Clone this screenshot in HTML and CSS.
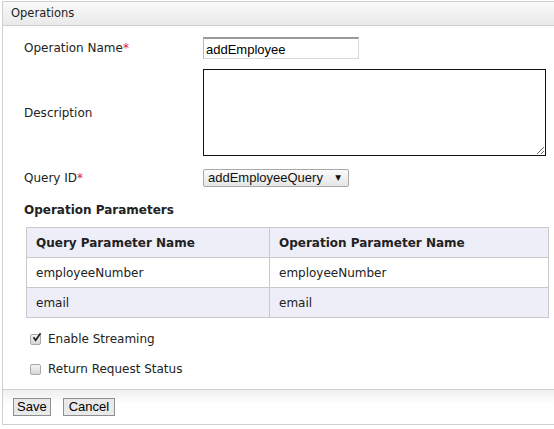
FILE: index.html
```html
<!DOCTYPE html>
<html>
<head>
<meta charset="utf-8">
<link rel="stylesheet" href="styles.css">
</head>
<body>
<div class="panel">
  <div class="panel-header">Operations</div>
  <div class="panel-body">
    <div class="form-row row-name">
      <label class="label">Operation Name<span class="req">*</span></label>
      <input class="text-input" type="text" value="addEmployee">
    </div>
    <div class="form-row row-desc">
      <label class="label">Description</label>
      <textarea class="textarea"></textarea>
    </div>
    <div class="form-row row-query">
      <label class="label">Query ID<span class="req">*</span></label>
      <span class="select-wrap">
        <span class="select">addEmployeeQuery</span>
        <span class="select-arrow">▼</span>
      </span>
    </div>
    <div class="section-title">Operation Parameters</div>
    <table class="params">
      <thead>
        <tr><th class="col1">Query Parameter Name</th><th>Operation Parameter Name</th></tr>
      </thead>
      <tbody>
        <tr><td>employeeNumber</td><td>employeeNumber</td></tr>
        <tr class="alt"><td>email</td><td>email</td></tr>
      </tbody>
    </table>
    <div class="checks">
      <label class="check-row">
        <span class="cb"><svg width="11" height="11" viewBox="0 0 11 11"><path d="M2.5 5.2 L4.6 8.2 L9.6 1.2" fill="none" stroke="#222" stroke-width="1.7"/></svg></span>
        <span>Enable Streaming</span>
      </label>
      <label class="check-row">
        <span class="cb"></span>
        <span>Return Request Status</span>
      </label>
    </div>
  </div>
  <div class="panel-footer">
    <button class="btn btn-save" type="button">Save</button>
    <button class="btn btn-cancel" type="button">Cancel</button>
  </div>
</div>
</body>
</html>
```

FILE: styles.css
```css
html, body {
  margin: 0;
  padding: 0;
  background: #fff;
  overflow: hidden;
}
body {
  font-family: "DejaVu Sans", Verdana, sans-serif;
  font-size: 12px;
  color: #222;
}
.panel {
  margin: 1px 0 0 2px;
  border-top: 1px solid #cfcfcf;
  border-left: 1px solid #cfcfcf;
  border-bottom: 1px solid #cfcfcf;
}
.panel-header {
  height: 23px;
  line-height: 23px;
  padding-left: 8px;
  font-size: 11.5px;
  background: linear-gradient(#fafafa, #e9e9e9);
  border-bottom: 1px solid #cfcfcf;
  color: #222;
}
.panel-body {
  padding: 11px 0 5px 21px;
}
.form-row {
  display: flex;
  align-items: center;
}
.label {
  width: 179px;
  flex: none;
}
.req {
  color: #e32222;
}
.row-name { margin-bottom: 10px; }
.row-desc { margin-bottom: 13px; }
.text-input {
  box-sizing: border-box;
  width: 156px;
  height: 22px;
  margin: 0;
  padding: 1px 2px 0;
  border: 1px solid #d8d8d8;
  border-top: 2px solid #9a9a9a;
  border-left-color: #b8b8b8;
  font-family: "Liberation Sans", Arial, sans-serif;
  font-size: 13px;
  color: #000;
  background: #fff;
  outline: none;
}
.textarea {
  box-sizing: border-box;
  width: 343px;
  height: 87px;
  margin: 0;
  border: 1px solid #111;
  padding: 2px;
  resize: both;
  outline: none;
}
.select-wrap {
  position: relative;
  display: inline-block;
}
.select {
  display: block;
  box-sizing: border-box;
  width: 146px;
  height: 18px;
  line-height: 16px;
  padding-left: 4px;
  border: 1px solid #a8a8a8;
  border-radius: 2px;
  background: linear-gradient(#fbfbfb, #e6e6e6);
  font-family: "Liberation Sans", Arial, sans-serif;
  font-size: 13px;
  color: #111;
}
.select-arrow {
  position: absolute;
  right: 8px;
  top: 4px;
  font-size: 7.5px;
  line-height: 9px;
  color: #111;
}
.section-title {
  font-weight: bold;
  margin-top: 15px;
  line-height: 16px;
  color: #222;
}
.params {
  margin: 9px 0 0 2px;
  width: 523px;
  border-collapse: collapse;
  border: 1px solid #c9c9c9;
}
.params th,
.params td {
  border: 1px solid #c9c9c9;
  height: 29px;
  padding: 0 0 0 9px;
  text-align: left;
  color: #222;
}
.params th {
  background: #eeeef9;
  font-weight: bold;
}
.params .col1 {
  width: 233px;
}
.params tr.alt td {
  background: #eeeef9;
}
.checks {
  margin-top: 6px;
  padding-left: 6px;
}
.check-row {
  display: flex;
  align-items: center;
  height: 30px;
}
.cb {
  box-sizing: border-box;
  width: 11px;
  height: 11px;
  margin-right: 7px;
  border: 1px solid #a9a9a9;
  border-radius: 2px;
  background: linear-gradient(#f4f4f4, #d6d6d6);
  position: relative;
  display: inline-block;
}
.cb svg {
  position: absolute;
  left: 0;
  top: -3px;
}
.panel-footer {
  border-top: 1px solid #cfcfcf;
  background: linear-gradient(#efefef, #fff 14px);
  padding: 8px 0 8px 10px;
  display: flex;
  gap: 12px;
}
.btn {
  height: 18px;
  margin: 0;
  padding: 0 3px;
  border: 1px solid #8f8f8f;
  border-radius: 0;
  background: #e9e9e9;
  font-family: "Liberation Sans", Arial, sans-serif;
  font-size: 13px;
  line-height: 16px;
  color: #000;
}
.btn-cancel {
  padding: 0 5px;
}
```
